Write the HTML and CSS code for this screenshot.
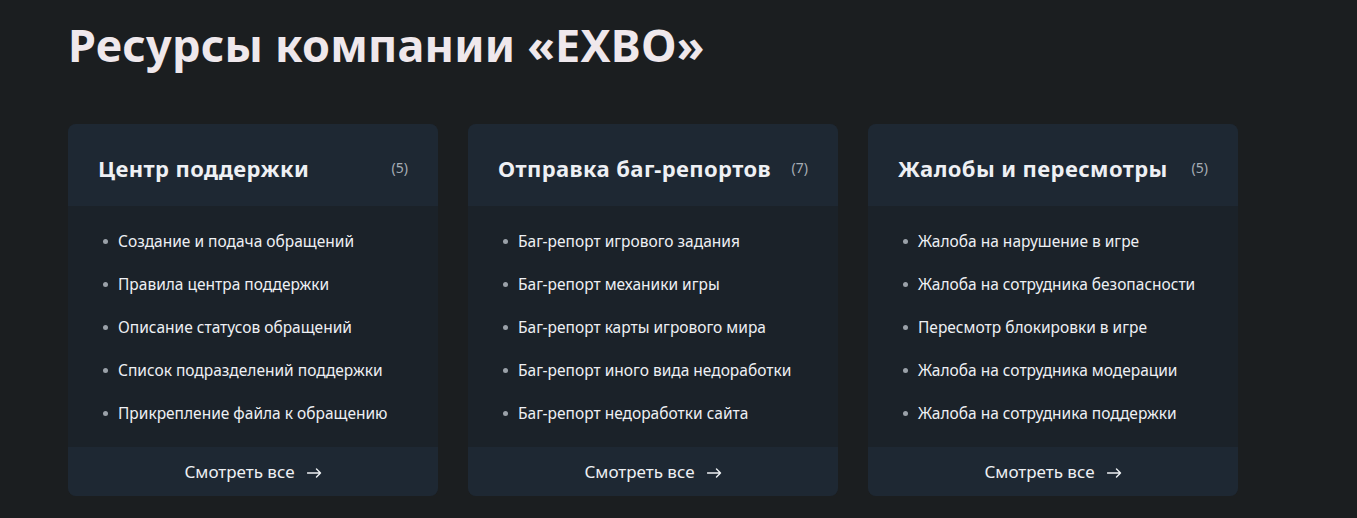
FILE: index.html
```html
<!DOCTYPE html>
<html lang="ru">
<head>
<meta charset="utf-8">
<title>Ресурсы компании «EXBO»</title>
<link rel="stylesheet" href="styles.css">
</head>
<body>
<main class="page">
  <h1 class="page-title">Ресурсы компании «EXBO»</h1>
  <div class="cards">
    <section class="card">
      <header class="card-head">
        <h2 class="card-title">Центр поддержки</h2>
        <span class="card-count">(5)</span>
      </header>
      <ul class="card-list">
        <li>Создание и подача обращений</li>
        <li>Правила центра поддержки</li>
        <li>Описание статусов обращений</li>
        <li>Список подразделений поддержки</li>
        <li>Прикрепление файла к обращению</li>
      </ul>
      <a class="card-more" href="#">Смотреть все <svg class="arrow" width="15" height="10" viewBox="0 0 15 10"><path d="M0.5 5H13.5M9.5 1L13.5 5L9.5 9" fill="none" stroke="#eef0f4" stroke-width="1.4" stroke-linecap="round" stroke-linejoin="round"/></svg></a>
    </section>
    <section class="card">
      <header class="card-head">
        <h2 class="card-title">Отправка баг-репортов</h2>
        <span class="card-count">(7)</span>
      </header>
      <ul class="card-list">
        <li>Баг-репорт игрового задания</li>
        <li>Баг-репорт механики игры</li>
        <li>Баг-репорт карты игрового мира</li>
        <li>Баг-репорт иного вида недоработки</li>
        <li>Баг-репорт недоработки сайта</li>
      </ul>
      <a class="card-more" href="#">Смотреть все <svg class="arrow" width="15" height="10" viewBox="0 0 15 10"><path d="M0.5 5H13.5M9.5 1L13.5 5L9.5 9" fill="none" stroke="#eef0f4" stroke-width="1.4" stroke-linecap="round" stroke-linejoin="round"/></svg></a>
    </section>
    <section class="card">
      <header class="card-head">
        <h2 class="card-title">Жалобы и пересмотры</h2>
        <span class="card-count">(5)</span>
      </header>
      <ul class="card-list">
        <li>Жалоба на нарушение в игре</li>
        <li>Жалоба на сотрудника безопасности</li>
        <li>Пересмотр блокировки в игре</li>
        <li>Жалоба на сотрудника модерации</li>
        <li>Жалоба на сотрудника поддержки</li>
      </ul>
      <a class="card-more" href="#">Смотреть все <svg class="arrow" width="15" height="10" viewBox="0 0 15 10"><path d="M0.5 5H13.5M9.5 1L13.5 5L9.5 9" fill="none" stroke="#eef0f4" stroke-width="1.4" stroke-linecap="round" stroke-linejoin="round"/></svg></a>
    </section>
  </div>
</main>
</body>
</html>
```
FILE: styles.css
```css
html, body {
  margin: 0;
  padding: 0;
  background: #1b1e20;
}
body {
  font-family: "Noto Sans", "Open Sans", sans-serif;
  color: #eef0f4;
}
.page {
  padding: 12px 68px 0;
}
.page-title {
  margin: 0;
  font-size: 45px;
  font-weight: 700;
  line-height: 66px;
  color: #efe8ec;
  letter-spacing: 0.2px;
}
.cards {
  display: flex;
  gap: 30px;
  margin-top: 46px;
}
.card {
  width: 370px;
  height: 372px;
  border-radius: 8px;
  overflow: hidden;
  background: #1b2229;
  display: flex;
  flex-direction: column;
}
.card-head {
  height: 82px;
  box-sizing: border-box;
  padding: 5px 30px 0;
  background: #1e2833;
  display: flex;
  align-items: center;
  justify-content: space-between;
}
.card-title {
  margin: 0;
  font-size: 22px;
  font-weight: 700;
  letter-spacing: 0.4px;
  color: #eef0f4;
  white-space: nowrap;
}
.card-count {
  font-size: 14px;
  color: #a6adb5;
  margin-left: 10px;
}
.card-list {
  margin: 0;
  padding: 14px 0 0 50px;
  list-style: none;
  flex: 1;
}
.card-list li {
  position: relative;
  font-size: 15.5px;
  line-height: 43px;
  color: #eef0f4;
  white-space: nowrap;
}
.card-list li::before {
  content: "";
  position: absolute;
  left: -15px;
  top: 19px;
  width: 5px;
  height: 5px;
  border-radius: 50%;
  background: #9aa1a8;
}
.card-more {
  height: 49px;
  background: #1e2833;
  display: flex;
  align-items: center;
  justify-content: center;
  gap: 12px;
  font-size: 17px;
  color: #eef0f4;
  text-decoration: none;
}
.arrow {
  display: block;
  margin-top: 2px;
}
```
